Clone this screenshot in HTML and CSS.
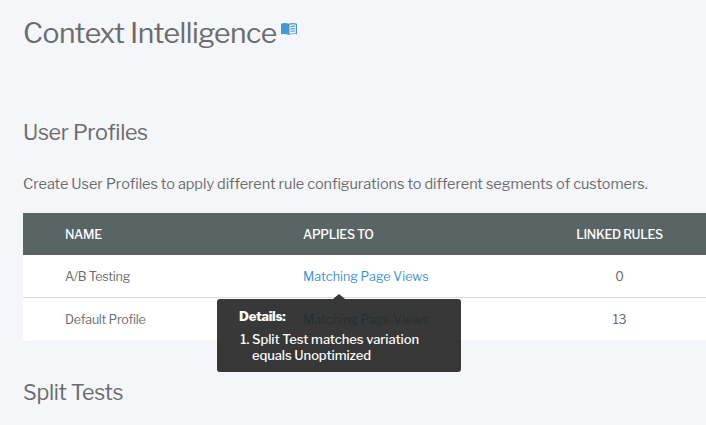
FILE: index.html
```html
<!DOCTYPE html>
<html lang="en">
<head>
  <meta charset="UTF-8" />
  <meta name="viewport" content="width=device-width, initial-scale=1.0"/>
  <title>Context Intelligence</title>
  <link rel="stylesheet" href="styles.css">
</head>
<body>

<main class="page">
  <header class="page-title">
    <h1>Context Intelligence</h1>
    <a href="#" class="docs-link" aria-label="Documentation">
      <svg width="16" height="12" viewBox="0 0 16 12">
        <path fill="#4599cc" d="M0 .8C2.500 -.2 5.500 -.2 8 .8C10.500 -.2 13.500 -.2 16 .8V11.500C13.500 10.800 10.500 10.800 8 12C5.500 10.800 2.500 10.800 0 11.500Z"/>
        <path fill="#f4f6fa" d="M8.500 1.800C10.500 1 12.800 1 14.800 1.800V10.500C12.800 10 10.500 10 8.500 10.900Z"/>
        <path fill="none" stroke="#4599cc" stroke-width="1.200" d="M9.500 3.700C11 3.100 12.300 3.100 13.800 3.400M9.500 6.100C11 5.500 12.300 5.500 13.800 5.800M9.500 8.500C11 7.900 12.300 7.900 13.800 8.200"/>
      </svg>
    </a>
  </header>

  <section class="profiles">
    <h2>User Profiles</h2>
    <p class="intro">Create User Profiles to apply different rule configurations to different segments of customers.</p>

    <table>
      <thead>
        <tr>
          <th class="name">NAME</th>
          <th class="views">APPLIES TO</th>
          <th class="count">LINKED RULES</th>
        </tr>
      </thead>
      <tbody>
        <tr>
          <td>A/B Testing</td>
          <td>
            <div class="applies">
              <a href="#">Matching Page Views</a>
              <div class="tooltip">
                <strong>Details:</strong>
                <ol>
                  <li>Split Test matches variation<br/>equals Unoptimized</li>
                </ol>
              </div>
            </div>
          </td>
          <td class="count">0</td>
        </tr>
        <tr>
          <td>Default Profile</td>
          <td><a href="#">Matching Page Views</a></td>
          <td class="count">13</td>
        </tr>
      </tbody>
    </table>
  </section>

  <section>
    <h2>Split Tests</h2>
  </section>
</main>

</body>
</html>
```
FILE: styles.css
```css
* {
  box-sizing: border-box;
}
body {
  margin: 0;
  background-color: #f4f6fa;
  color: #6c6c6c;
  font-family: "Libre Franklin", "Open Sans", sans-serif;
}
a {
  color: #3d94c9;
  text-decoration: none;
}
.page {
  padding: 13px 0 0 23px;
}
.page-title {
  display: flex;
  height: 40px;
}
h1 {
  margin: 0;
  font-size: 28.3px;
  line-height: 41px;
  font-weight: 400;
  letter-spacing: -0.52px;
  white-space: nowrap;
}
.docs-link {
  margin: 10px 0 0 4px;
  line-height: 0;
}
.profiles {
  margin-top: 64px;
}
h2 {
  margin: 0;
  font-size: 21.5px;
  line-height: 30px;
  font-weight: 400;
  letter-spacing: -0.34px;
}
.intro {
  margin: 27px 0 19px;
  font-size: 14.5px;
  line-height: 20px;
  letter-spacing: -0.055px;
}
table {
  width: 100%;
  margin-bottom: 37px;
  table-layout: fixed;
  border-collapse: separate;
  border-spacing: 0;
  background-color: #fff;
  font-size: 12.5px;
  line-height: 18px;
}
th, td {
  height: 42px;
  padding: 2px 0 0 42px;
  text-align: left;
  letter-spacing: -0.25px;
}
th {
  background-color: #596465;
  color: #fff;
  font-weight: 500;
  letter-spacing: -0.35px;
}
td a {
  letter-spacing: 0.04px;
}
tbody tr + tr td {
  height: 43px;
  border-top: 1px solid #d9dadc;
}
.name {
  width: 238px;
}
.views {
  width: 239px;
}
.count {
  padding-left: 33px;
  text-align: center;
}
.applies {
  position: relative;
}
.tooltip {
  position: absolute;
  top: 31px;
  left: -86px;
  width: 244px;
  height: 73px;
  padding: 9px 22px;
  border-radius: 3px;
  background-color: rgba(34, 34, 34, 0.9);
  color: #fff;
  font-size: 13px;
  line-height: 16px;
  font-weight: 500;
  letter-spacing: -0.07px;
}
.tooltip::before {
  content: "";
  position: absolute;
  top: -5px;
  left: 116px;
  border: 6px solid transparent;
  border-top: 0;
  border-bottom: 5px solid rgba(34, 34, 34, 0.9);
}
.tooltip strong {
  display: block;
  font-weight: 800;
  letter-spacing: -0.2px;
}
.tooltip ol {
  margin: 7px 0 0;
  padding-left: 13px;
  white-space: nowrap;
}
```
